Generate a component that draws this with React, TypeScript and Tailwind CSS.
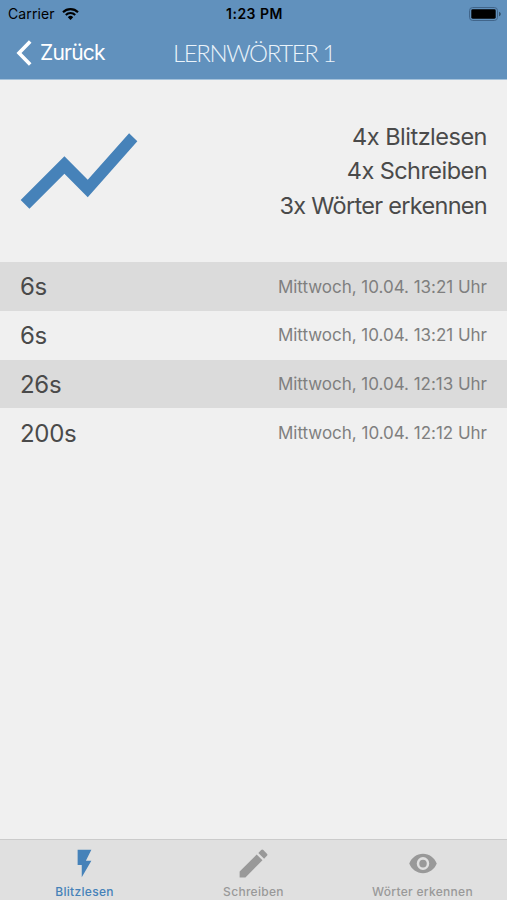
import React from 'react';

interface Attempt {
  duration: string;
  date: string;
}

const summary = [
  { text: '4x Blitzlesen', className: 'tracking-[-0.5px]' },
  { text: '4x Schreiben', className: 'tracking-[-0.55px]' },
  { text: '3x Wörter erkennen', className: 'tracking-[-0.7px]' },
];

const attempts: Attempt[] = [
  { duration: '6s', date: 'Mittwoch, 10.04. 13:21 Uhr' },
  { duration: '6s', date: 'Mittwoch, 10.04. 13:21 Uhr' },
  { duration: '26s', date: 'Mittwoch, 10.04. 12:13 Uhr' },
  { duration: '200s', date: 'Mittwoch, 10.04. 12:12 Uhr' },
];

const WifiIcon = () => (
  <svg className="w-[17px] h-3" viewBox="0 0 17 12" fill="none" stroke="#000" strokeWidth={2.1}>
    <path d="M1 4.2a10.6 10.6 0 0 1 15 0" />
    <path d="M3.8 7a6.7 6.7 0 0 1 9.4 0" />
    <path d="M8.5 12 5.8 9.2a3.8 3.8 0 0 1 5.4 0z" fill="#000" stroke="none" />
  </svg>
);

const BatteryIcon = () => (
  <svg className="w-8 h-3.5" viewBox="0 0 32 14">
    <rect x=".5" y=".5" width="28" height="13" rx="3.2" fill="none" stroke="#41658a" />
    <rect x="2.3" y="2.3" width="24.4" height="9.4" rx="1.4" fill="#000" />
    <path d="M30 4.7c2.4.8 2.4 3.8 0 4.6z" fill="#35536c" />
  </svg>
);

const tabs = [
  {
    label: 'Blitzlesen',
    color: 'text-[#4682b9]',
    icon: <svg className="w-[33px] h-[33px]" viewBox="0 0 24 24" fill="currentColor"><path d="M7 2v11h3v9l7-12h-4l4-8z" /></svg>,
  },
  {
    label: 'Schreiben',
    color: 'text-[#999]',
    icon: <svg className="w-[37px] h-[37px]" viewBox="0 0 24 24" fill="currentColor"><path d="M3 17.25V21h3.75L17.81 9.94l-3.75-3.75L3 17.25zM20.71 7.04a1 1 0 0 0 0-1.41l-2.34-2.34a1 1 0 0 0-1.41 0l-1.83 1.83 3.75 3.75 1.83-1.83z" /></svg>,
  },
  {
    label: 'Wörter erkennen',
    color: 'text-[#999]',
    icon: <svg className="w-[30px] h-[31px]" viewBox="0 0 24 24" preserveAspectRatio="none" fill="currentColor"><path d="M12 4.5C7 4.5 2.73 7.61 1 12c1.73 4.39 6 7.5 11 7.5s9.27-3.11 11-7.5c-1.73-4.39-6-7.5-11-7.5zM12 17a5 5 0 1 1 0-10 5 5 0 0 1 0 10zm0-8a3 3 0 1 0 0 6 3 3 0 0 0 0-6z" /></svg>,
  },
];

const App: React.FC = () => {
  return (
    <div className="h-screen flex flex-col bg-[#f0f0f0] text-[#4a4a4a] overflow-hidden whitespace-nowrap font-['Inter','Liberation_Sans',sans-serif]">
      <header className="h-20 shrink-0 bg-[#6191bd] border-b border-[#a5c2db]">
        <div className="h-[27px] grid grid-cols-3 items-center pl-2 pr-1.5 text-black">
          <div className="flex items-center gap-[7px] text-sm tracking-[0.1px]">
            <span>Carrier</span>
            <WifiIcon />
          </div>
          <div className="text-center text-sm font-semibold tracking-[0.5px]">1:23 PM</div>
          <div className="flex justify-end"><BatteryIcon /></div>
        </div>
        <div className="h-[51px] grid grid-cols-[154px_200px_153px] items-center text-white">
          <div className="flex items-center gap-2 pl-4">
            <svg className="w-4 h-[26px]" viewBox="0 0 16 26" fill="none" stroke="currentColor" strokeWidth={3.6}>
              <path d="M14.2 1.5 3 13l11.2 11.5" />
            </svg>
            <span className="text-[21px] leading-6 pt-px tracking-[-0.8px]">Zurück</span>
          </div>
          <h1 className="text-center text-2xl leading-6 font-light tracking-[-1.4px] text-[#eaf3fa] font-['Lato',sans-serif]">LERNWÖRTER 1</h1>
        </div>
      </header>

      <main className="flex-1">
        <section className="h-[182px] flex items-center justify-between pl-[9px] pr-5">
          <svg className="w-[140px] h-[140px] mb-px" viewBox="0 0 24 24" fill="#4682b9">
            <path d="M3.5 18.49l6-6.01 4 4L22 6.92l-1.41-1.41-7.09 7.97-4-4L2 16.99z" />
          </svg>
          <div className="pt-px text-right text-[23.5px] leading-[34.3px]">
            {summary.map((line) => (
              <p key={line.text} className={line.className}>{line.text}</p>
            ))}
          </div>
        </section>
        <ul>
          {attempts.map((attempt, i) => (
            <li key={i} className="h-[48.8px] flex items-center justify-between px-5 pt-0.5 odd:bg-[#dbdbdb]">
              <span className="text-[24px] tracking-[-0.3px]">{attempt.duration}</span>
              <span className="text-[17px] text-[#7f7f7f] tracking-[-0.02px]">{attempt.date}</span>
            </li>
          ))}
        </ul>
      </main>

      <nav className="h-[61px] shrink-0 grid grid-cols-3 bg-[#e0e0e0] border-t border-[#cbcbcb]">
        {tabs.map((tab) => (
          <div key={tab.label} className={`flex flex-col items-center ${tab.color}`}>
            <div className="h-[46px] flex items-center">{tab.icon}</div>
            <span className="text-xs leading-3 font-medium tracking-[0.3px]">{tab.label}</span>
          </div>
        ))}
      </nav>
    </div>
  );
};

export default App;
